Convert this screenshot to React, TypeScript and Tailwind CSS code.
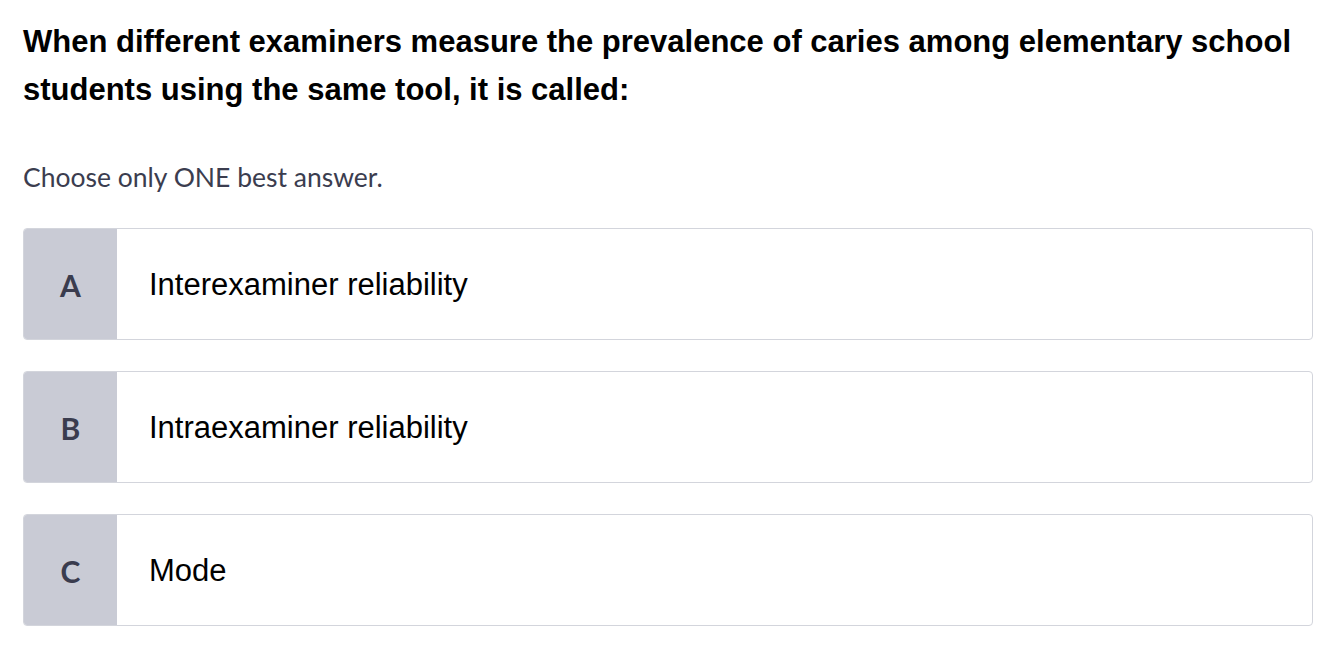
const options = [
  { letter: 'A', text: 'Interexaminer reliability' },
  { letter: 'B', text: 'Intraexaminer reliability' },
  { letter: 'C', text: 'Mode' },
];

export default function App() {
  return (
    <div className="min-h-screen bg-white pl-[23px] pr-[21px] pt-[18px]">
      <h1 className="font-['Liberation_Sans',Arial,sans-serif] text-[31px] leading-[48px] font-bold text-black">
        When different examiners measure the prevalence of caries among elementary school students using the same tool, it is called:
      </h1>

      <p className="mt-[47px] font-['Lato',sans-serif] text-[26.5px] leading-[32px] text-[#3b3d4f]">
        Choose only ONE best answer.
      </p>

      <div className="mt-[35px] flex flex-col gap-[31px]">
        {options.map(opt => (
          <div
            key={opt.letter}
            className="flex h-[112px] overflow-hidden rounded-[4px] border border-[#d3d5dc] bg-white"
          >
            <div className="flex w-[93px] shrink-0 items-center justify-center bg-[#c9cbd5] pt-[2px] font-['Lato',sans-serif] text-[30px] font-bold text-[#3a3c4e]">
              {opt.letter}
            </div>
            <div className="flex items-center pl-[32px] pt-[2px] font-['Liberation_Sans',Arial,sans-serif] text-[31px] text-black">
              {opt.text}
            </div>
          </div>
        ))}
      </div>
    </div>
  );
}
